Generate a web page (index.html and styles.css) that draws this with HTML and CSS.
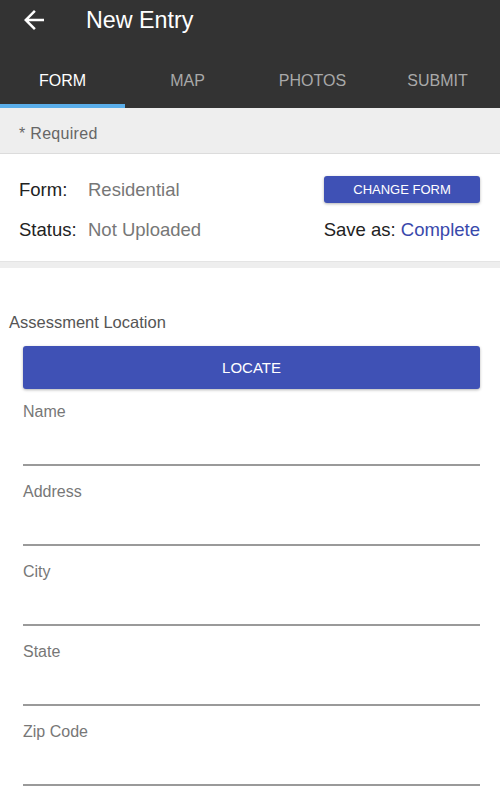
FILE: index.html
```html
<!DOCTYPE html>
<html>
<head>
<meta charset="utf-8">
<link rel="stylesheet" href="styles.css">
</head>
<body>
<div class="appbar">
  <div class="titlebar">
    <svg class="back" viewBox="0 0 24 24" width="30" height="30"><path fill="#fff" d="M20 11H7.83l5.59-5.59L12 4l-8 8 8 8 1.41-1.41L7.83 13H20v-2z"/></svg>
    <div class="title">New Entry</div>
  </div>
  <div class="tabs">
    <div class="tab active">FORM</div>
    <div class="tab">MAP</div>
    <div class="tab">PHOTOS</div>
    <div class="tab">SUBMIT</div>
  </div>
</div>
<div class="required">* Required</div>
<div class="info">
  <div class="info-row">
    <div class="pair"><span class="key">Form:</span><span class="val">Residential</span></div>
    <button class="btn small">CHANGE FORM</button>
  </div>
  <div class="info-row second">
    <div class="pair"><span class="key">Status:</span><span class="val">Not Uploaded</span></div>
    <div class="save">Save as: <span class="link">Complete</span></div>
  </div>
</div>
<div class="sep"></div>
<div class="section">
  <div class="section-label">Assessment Location</div>
  <div class="fields">
    <button class="btn big">LOCATE</button>
    <div class="field"><div class="flabel">Name</div><div class="finput"></div></div>
    <div class="field"><div class="flabel">Address</div><div class="finput"></div></div>
    <div class="field"><div class="flabel">City</div><div class="finput"></div></div>
    <div class="field"><div class="flabel">State</div><div class="finput"></div></div>
    <div class="field"><div class="flabel">Zip Code</div><div class="finput"></div></div>
  </div>
</div>
</body>
</html>
```
FILE: styles.css
```css
* { box-sizing: border-box; }
html, body { margin: 0; padding: 0; background: #fff; }
body { font-family: "Liberation Sans", Arial, sans-serif; width: 500px; overflow: hidden; }

.appbar { background: #333333; }
.titlebar { height: 40px; display: flex; align-items: center; padding-left: 19px; }
.back { display: block; }
.title { color: #fff; font-size: 23.3px; margin-left: 37px; line-height: 28px; }

.tabs { display: flex; height: 68px; }
.tab { flex: 1; display: flex; align-items: flex-end; justify-content: center; padding-bottom: 13px; color: #a9a9a9; font-size: 16px; line-height: 20px; border-bottom: 4px solid transparent; }
.tab.active { color: #fff; border-bottom-color: #5aaeea; }

.required { background: #eeeeee; height: 46px; padding: 16px 19px 0; font-size: 16px; letter-spacing: 0.3px; line-height: 20px; color: #666; border-bottom: 1px solid #dcdcdc; }

.info { padding: 22px 20px 19px 19px; }
.info-row { display: flex; justify-content: space-between; align-items: center; height: 27px; }
.info-row.second { margin-top: 15px; height: 24px; }
.pair { display: flex; font-size: 18.5px; line-height: 24px; }
.key { width: 69px; color: #222; }
.val { color: #777; }
.save { font-size: 18.5px; line-height: 24px; color: #222; }
.link { color: #3949ab; }

.btn { border: none; background: #3f51b5; color: #fff; font-family: inherit; border-radius: 3px; box-shadow: 0 1px 3px rgba(0,0,0,0.3); padding: 0; }
.btn.small { width: 156px; height: 27px; font-size: 13px; }
.btn.big { width: 100%; height: 43px; font-size: 15px; display: block; }

.sep { height: 7px; background: #eeeeee; border-top: 1px solid #e4e4e4; }

.section { padding: 44px 20px 0 9px; }
.section-label { font-size: 16.5px; line-height: 20px; color: #555; }
.fields { padding-left: 14px; margin-top: 14px; }
.field { margin-top: 13px; }
.field + .field { margin-top: 16px; }
.flabel { font-size: 16px; line-height: 20px; color: #777; }
.finput { height: 44px; border-bottom: 2px solid #9a9a9a; }
```
